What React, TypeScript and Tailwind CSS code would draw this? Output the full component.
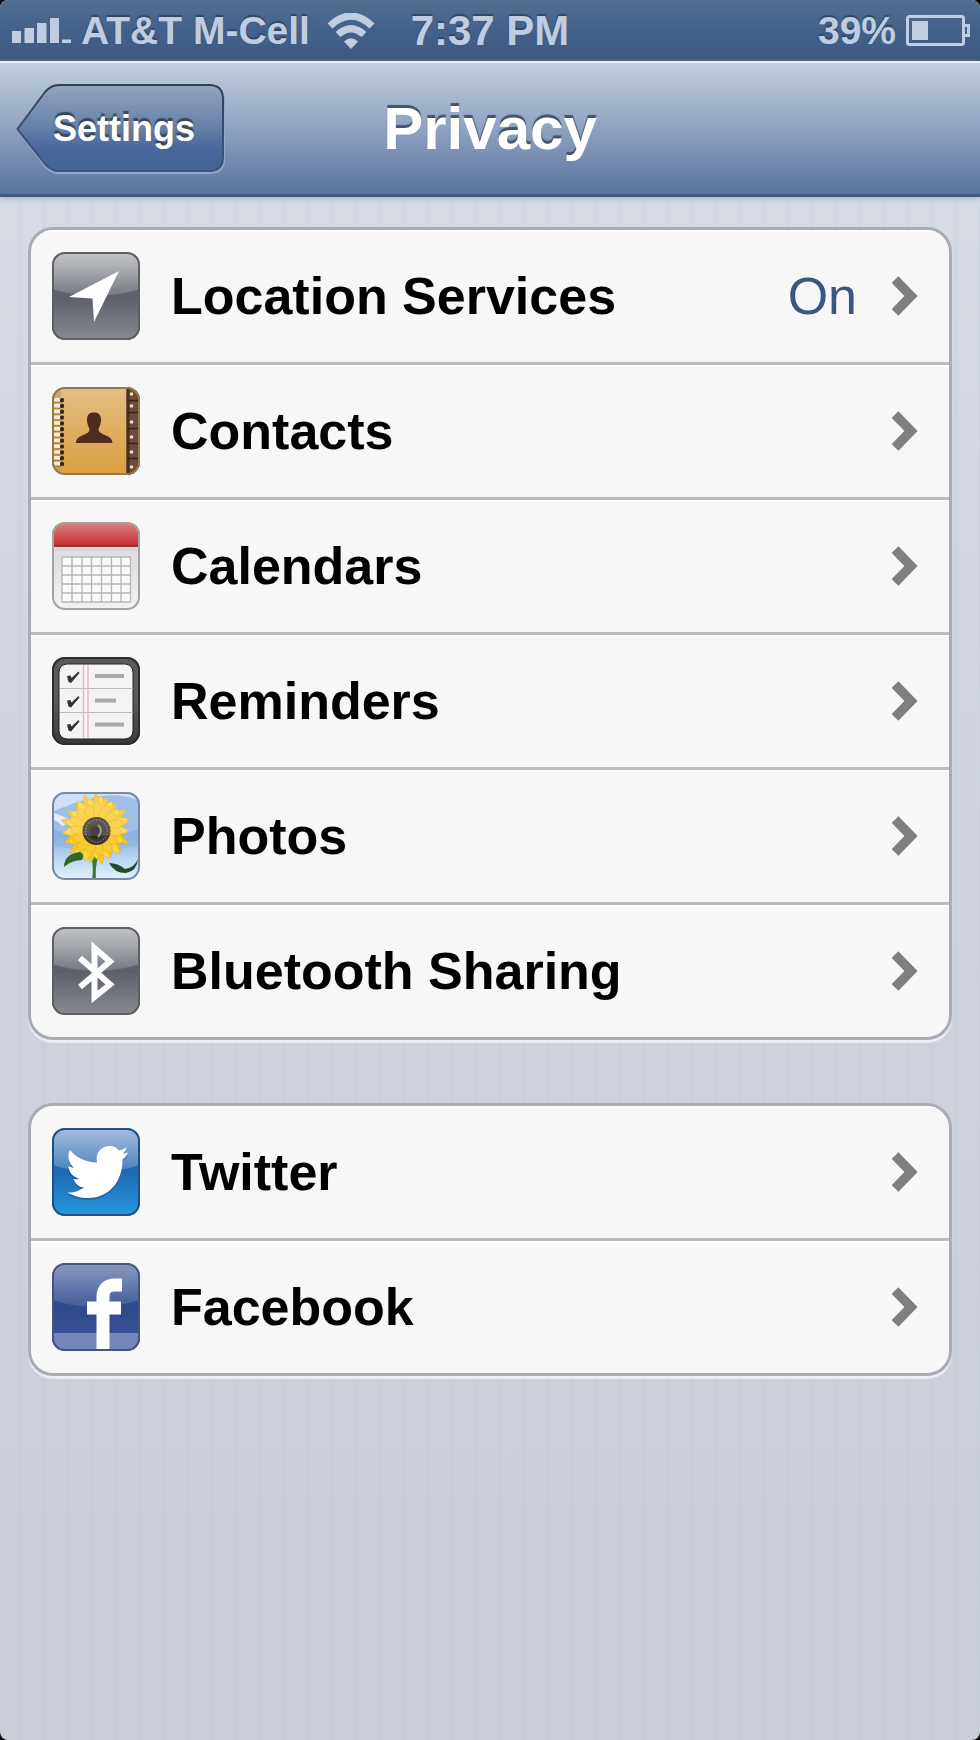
/**
 * Privacy settings screen
 * Status bar, navigation bar and grouped rows of apps
 */
import type { ReactNode } from 'react';

interface SettingsRow {
  label: string;
  icon: ReactNode;
  value?: string;
}

interface IconTileProps {
  id: string;
  from: string;
  mid?: string;
  to: string;
  border: string;
  gloss?: number;
  children: ReactNode;
}

const birdPath =
  'M18 22C24 30 34 34 45 34.5C43 25 49 18 58 18C62 18 65 20 67 22.5C69.5 22 72 21 74.5 19.5C74 22 73 24 71 25.5C73 25.5 74.5 25 76 24.5C75 27.5 73 29.5 70.5 31.5C71 52 58 70 36 70C28 70 21 68 15.5 64.5C22 65 27 63 32 59.5C27 59 23 56 21.5 51C23.5 51.5 25 51.5 27 50.5C21 49 16.5 44 16.5 38C18 39 20 39.5 22 39.5C17 36 14.5 28 18 22Z';

// Rounded 88x88 tile shared by all app icons
function IconTile({ id, from, mid = from, to, border, gloss = 0, children }: IconTileProps) {
  return (
    <svg viewBox="0 0 88 88" className="h-[88px] w-[88px] shrink-0" aria-hidden="true">
      <defs>
        <linearGradient id={`${id}-bg`} x1="0" y1="0" x2="0" y2="1">
          <stop offset="0" stopColor={from} />
          <stop offset="0.5" stopColor={mid} />
          <stop offset="1" stopColor={to} />
        </linearGradient>
        <linearGradient id={`${id}-gloss`} x1="0" y1="0" x2="0" y2="1">
          <stop offset="0" stopColor="#fff" stopOpacity={gloss} />
          <stop offset="1" stopColor="#fff" stopOpacity={gloss * 0.3} />
        </linearGradient>
        <clipPath id={`${id}-clip`}>
          <rect width="88" height="88" rx="13" />
        </clipPath>
      </defs>
      <g clipPath={`url(#${id}-clip)`}>
        <rect width="88" height="88" fill={`url(#${id}-bg)`} />
        {gloss > 0 && <path d="M0 0H88V37Q44 51 0 37Z" fill={`url(#${id}-gloss)`} />}
        {children}
      </g>
      <rect x="1" y="1" width="86" height="86" rx="12" fill="none" stroke={border} strokeWidth="2" />
    </svg>
  );
}

function LocationIcon() {
  return (
    <IconTile id="location" from="#888b91" mid="#5a5f68" to="#888b91" border="#5c5f66" gloss={0.5}>
      <path d="M67 19L42 70L40.5 46.5L17 45Z" fill="#fff" />
    </IconTile>
  );
}

function ContactsIcon() {
  const rings = Array.from({ length: 12 }, (_, i) => 11 + i * 5.8);
  const tabs = [7, 19, 35, 50, 65, 80];

  return (
    <IconTile id="contacts" from="#e2bf85" mid="#dfae60" to="#db9f3e" border="#94784f">
      <rect width="9" height="88" fill="#c69a5c" opacity="0.6" />
      {rings.map((y) => (
        <g key={y}>
          <rect x="2" y={y} width="7" height="3.6" rx="1" fill="#f6ecd8" />
          <rect x="8" y={y} width="4" height="4.2" rx="1.5" fill="#35261a" />
          <path d={`M2 ${y + 4.5}H9`} stroke="#a57c45" strokeWidth="1" />
        </g>
      ))}
      <rect x="74.5" width="14" height="88" fill="#6b4b3a" />
      <rect x="74.5" width="3" height="88" fill="#4a3024" />
      {tabs.map((y) => (
        <g key={y}>
          <path d={`M75 ${y + 6.5}H88`} stroke="#34211a" strokeWidth="1.5" />
          <circle cx="79.5" cy={y} r="1.8" fill="#e6dcd2" />
        </g>
      ))}
      <path
        d="M35 33C35 27 38 25.5 42 25.5S49 27 49 33C49 38 47 39 46.5 43C48 49 60 47 60.5 56H24C24.500 47 36 49 37.500 43C37 39 35 38 35 33Z"
        fill="#502c20"
      />
    </IconTile>
  );
}

function CalendarIcon() {
  const columns = [10, 20, 30, 39.5, 49.5, 59.5, 69, 78.5];
  const lines = [35, 44, 53, 62, 71, 80];

  return (
    <IconTile id="calendar" from="#e0e0e0" to="#f4f4f4" border="#a3a3a3">
      <defs>
        <linearGradient id="calendar-red" x1="0" y1="0" x2="0" y2="1">
          <stop offset="0" stopColor="#de8482" />
          <stop offset="1" stopColor="#c22d31" />
        </linearGradient>
      </defs>
      <rect width="88" height="24" fill="url(#calendar-red)" />
      <rect y="23" width="88" height="2" fill="#8e3234" />
      <rect y="25" width="88" height="4" fill="#cfcfcf" opacity="0.6" />
      <rect x="10" y="35" width="68.5" height="45" fill="#fafafa" />
      {columns.map((x) => (
        <path key={x} d={`M${x} 35V80`} stroke="#b5b5b5" strokeWidth="1.3" />
      ))}
      {lines.map((y) => (
        <path key={y} d={`M10 ${y}H78.5`} stroke="#b5b5b5" strokeWidth="1.3" />
      ))}
    </IconTile>
  );
}

function RemindersIcon() {
  const items = [
    { y: 19, end: 72 },
    { y: 43.5, end: 64 },
    { y: 67.5, end: 72 },
  ];

  return (
    <IconTile id="reminders" from="#5a5a5a" to="#383838" border="#2c2c2c">
      <rect x="7" y="7" width="74" height="75" rx="8" fill="#f3f3f3" stroke="#222" strokeWidth="1" />
      <path d="M8 31.5H81M8 55.5H81" stroke="#bcbcbc" strokeWidth="1" />
      <path d="M31.5 8V81M36 8V81" stroke="#f3b6c0" strokeWidth="1.5" />
      {items.map(({ y, end }) => (
        <g key={y}>
          <path d={`M15 ${y}L18.5 ${y - 0.5}L19.5 ${y + 2}L26.5 ${y - 4.5}L27.5 ${y - 3}L19 ${y + 7}L16.5 ${y + 6}Z`} fill="#333" />
          <path d={`M43 ${y}H${end}`} stroke="#a9a9a9" strokeWidth="4" />
        </g>
      ))}
    </IconTile>
  );
}

function PhotosIcon() {
  // Rings of petals, each turned a little against the one below
  const rings = [
    { count: 19, length: 36, color: '#f3c62c', turn: 0 },
    { count: 17, length: 34, color: '#fbd93b', turn: 9 },
    { count: 15, length: 28, color: '#f7cb33', turn: 4 },
  ];

  return (
    <IconTile id="photos" from="#8fb4e4" to="#e2f3fb" border="#7888a6">
      <path d="M0 0H88V9Q66 0 44 5Q22 10 0 20Z" fill="#c6dbf3" />
      <path d="M0 21Q12 23 20 30L10 34Q4 27 0 29Z" fill="#dde9f7" />
      <path d="M0 38Q44 51 88 38V54Q44 62 0 54Z" fill="#82b0df" opacity="0.4" />
      <path d="M39 65Q42 74 40 88H44Q43 75 46 65Z" fill="#3d7a2a" />
      {rings.map(({ count, length, color, turn }) =>
        Array.from({ length: count }, (_, i) => (
          <path
            key={`${color}-${i}`}
            d={`M0 -8C-7 -16 -5 -27 0 ${-length + (i % 3) * 2}C5 -27 7 -16 0 -8Z`}
            fill={color}
            stroke="#dfa31c"
            strokeWidth="0.4"
            transform={`translate(44 37) rotate(${turn + (i * 360) / count})`}
          />
        ))
      )}
      <path d="M12 75Q12 62 28 60Q33 62 30 68Q20 68 12 75Z" fill="#2c6628" />
      <path d="M57 71Q66 71 73 77Q82 76 86 67Q85 79 74 81Q62 81 57 71Z" fill="#214d26" />
      <circle cx="44.5" cy="39" r="14" fill="#3d332b" />
      <circle cx="44.5" cy="39" r="11" fill="none" stroke="#6b625b" strokeWidth="2" strokeDasharray="1.5 1.5" />
      <circle cx="44" cy="40" r="6" fill="#28221f" />
      <path d="M46 33Q52 38 46 45" fill="none" stroke="#938c88" strokeWidth="2" />
      <path d="M0 0H88V37Q44 51 0 37Z" fill="#fff" opacity="0.15" />
    </IconTile>
  );
}

function BluetoothIcon() {
  return (
    <IconTile id="bluetooth" from="#888b91" mid="#5a5f68" to="#888b91" border="#5c5f66" gloss={0.5}>
      <path d="M28 31L58 57.5L42.500 70V21L58 34.5L28 60" fill="none" stroke="#fff" strokeWidth="6" />
    </IconTile>
  );
}

function TwitterIcon() {
  return (
    <IconTile id="twitter" from="#3b6db2" mid="#1f68b2" to="#2499e0" border="#1f4f85" gloss={0.55}>
      <path d={birdPath} fill="#123a66" opacity="0.35" transform="translate(0 2)" />
      <path d={birdPath} fill="#fff" />
    </IconTile>
  );
}

function FacebookIcon() {
  return (
    <IconTile id="facebook" from="#5068a5" mid="#30498d" to="#3a5595" border="#47537c" gloss={0.32}>
      <rect y="70" width="88" height="18" fill="#7386b7" />
      <path d="M51 88V34Q51 22 63 22H70M35 45H69" fill="none" stroke="#fff" strokeWidth="13" />
    </IconTile>
  );
}

function SignalBars() {
  return (
    <svg viewBox="0 0 60 26" className="h-[26px] w-[60px]" role="img" aria-label="Signal strength">
      <path d="M0 13H9V25H0ZM12.5 10H22V25H12.5ZM25 5H34.5V25H25ZM38 0H47V25H38ZM50 21.5H59V25H50Z" fill="currentColor" />
    </svg>
  );
}

function WifiIcon() {
  return (
    <svg viewBox="0 0 48 36" className="h-[36px] w-[48px]" role="img" aria-label="Wi-Fi">
      <path d="M3 13Q24 -7 45 13" fill="none" stroke="currentColor" strokeWidth="7" />
      <path d="M11 21.5Q24 10 37 21.5" fill="none" stroke="currentColor" strokeWidth="7" />
      <path d="M17 28.5Q24 22 31 28.5L24 36Z" fill="currentColor" />
    </svg>
  );
}

function BatteryIcon() {
  return (
    <svg viewBox="0 0 64 32" className="h-[32px] w-[64px]" role="img" aria-label="Battery">
      <rect x="1.5" y="1.5" width="56" height="28" rx="2" fill="none" stroke="currentColor" strokeWidth="3" />
      <path d="M58 10.5H62.5V20.5H58" fill="none" stroke="currentColor" strokeWidth="3" />
      <rect x="6" y="6" width="16" height="19" fill="currentColor" />
    </svg>
  );
}

function Chevron() {
  return (
    <svg viewBox="0 0 26 40" className="h-[40px] w-[26px] shrink-0" aria-hidden="true">
      <path d="M3 3.5L19 20L3 36.5" fill="none" stroke="#7f7f7f" strokeWidth="9.5" />
    </svg>
  );
}

function StatusBar() {
  return (
    <div className="grid h-[61px] grid-cols-[1fr_auto_1fr] items-center bg-linear-to-b from-[#526e90] via-[#42618a] to-[#3d5980] px-[10px] font-bold text-[#bfcde2] [text-shadow:0_-2px_1px_#2f4767]">
      <div className="flex items-center gap-[9px] pl-0.5">
        <SignalBars />
        <span className="text-[39px]/[60px] whitespace-nowrap">AT&amp;T M-Cell</span>
        <span className="pl-2">
          <WifiIcon />
        </span>
      </div>
      <span className="text-[42px]/[60px]">7:37 PM</span>
      <div className="flex items-center justify-end gap-[10px]">
        <span className="text-[39px]/[60px]">39%</span>
        <BatteryIcon />
      </div>
    </div>
  );
}

function BackButton() {
  return (
    <button type="button" className="relative h-[92px] w-[210px] pl-[6px] text-center">
      <svg viewBox="0 0 210 92" className="absolute inset-0 h-full w-full" aria-hidden="true">
        <defs>
          <linearGradient id="back-bg" x1="0" y1="0" x2="0" y2="1">
            <stop offset="0" stopColor="#93a5c0" />
            <stop offset="0.5" stopColor="#6480a8" />
            <stop offset="0.75" stopColor="#48669a" />
            <stop offset="1" stopColor="#426394" />
          </linearGradient>
          <linearGradient id="back-border" x1="0" y1="0" x2="0" y2="1">
            <stop offset="0" stopColor="#2f4159" />
            <stop offset="1" stopColor="#3c5680" />
          </linearGradient>
        </defs>
        <path
          d="M2 47L29 10Q35 3 43 3H193Q208 3 208 18V76Q208 90 193 90H43Q35 90 29 83Z"
          fill="none"
          stroke="#90a9ca"
          strokeWidth="2"
        />
        <path
          d="M1.5 46L29 9Q35 2 43 2H193Q207 2 207 16V74Q207 88 193 88H43Q35 88 29 81Z"
          fill="url(#back-bg)"
          stroke="url(#back-border)"
          strokeWidth="2"
        />
      </svg>
      <span className="relative text-[36px]/[44px] font-bold text-white [text-shadow:0_-3px_1px_#36485f]">Settings</span>
    </button>
  );
}

function NavBar() {
  return (
    <header className="grid h-[136px] grid-cols-[1fr_auto_1fr] items-center border-t-2 border-b-3 border-t-[#e6f0f8] border-b-[#40587b] bg-linear-to-b from-[#c2cfdc] via-[#8fa2c2] to-[#58749c] px-4 shadow-[0_2px_5px_#a9b4c6]">
      <div className="flex">
        <BackButton />
      </div>
      <h1 className="text-[60px]/[72px] font-bold text-white [text-shadow:0_-3px_1px_#42536b]">Privacy</h1>
    </header>
  );
}

function SettingsGroup({ rows }: { rows: SettingsRow[] }) {
  return (
    <ul className="overflow-hidden rounded-[25px] border-3 border-[#a9acb5] bg-[#f7f7f7] shadow-[0_3px_1px_#eceff4]">
      {rows.map((row) => (
        <li key={row.label} className="border-b-3 border-[#bcbcbe] last:border-b-0">
          <a
            href="#"
            className="flex h-[132px] items-center gap-[31px] pr-[31px] pl-[21px] shadow-[inset_0_2px_0_#ffffff]"
          >
            {row.icon}
            <span className="flex-1 text-[52px]/[64px] font-bold text-black">{row.label}</span>
            {row.value && <span className="pr-1 text-[52px]/[64px] text-[#3b5583]">{row.value}</span>}
            <Chevron />
          </a>
        </li>
      ))}
    </ul>
  );
}

const dataRows: SettingsRow[] = [
  { label: 'Location Services', icon: <LocationIcon />, value: 'On' },
  { label: 'Contacts', icon: <ContactsIcon /> },
  { label: 'Calendars', icon: <CalendarIcon /> },
  { label: 'Reminders', icon: <RemindersIcon /> },
  { label: 'Photos', icon: <PhotosIcon /> },
  { label: 'Bluetooth Sharing', icon: <BluetoothIcon /> },
];

const socialRows: SettingsRow[] = [
  { label: 'Twitter', icon: <TwitterIcon /> },
  { label: 'Facebook', icon: <FacebookIcon /> },
];

export default function App() {
  return (
    <div className="min-h-screen bg-black font-['Liberation_Sans',Arial,sans-serif]">
      <div className="flex min-h-screen flex-col overflow-hidden rounded-[8px] bg-linear-to-b from-[#d9dee7] via-[#cfd3de] to-[#c8cdd7]">
        <StatusBar />
        <NavBar />
        <main className="flex flex-1 flex-col gap-[63px] bg-[repeating-linear-gradient(90deg,transparent_0px,transparent_16px,#b9c0cf33_20px,transparent_24px)] px-7 py-[30px]">
          <SettingsGroup rows={dataRows} />
          <SettingsGroup rows={socialRows} />
        </main>
      </div>
    </div>
  );
}
